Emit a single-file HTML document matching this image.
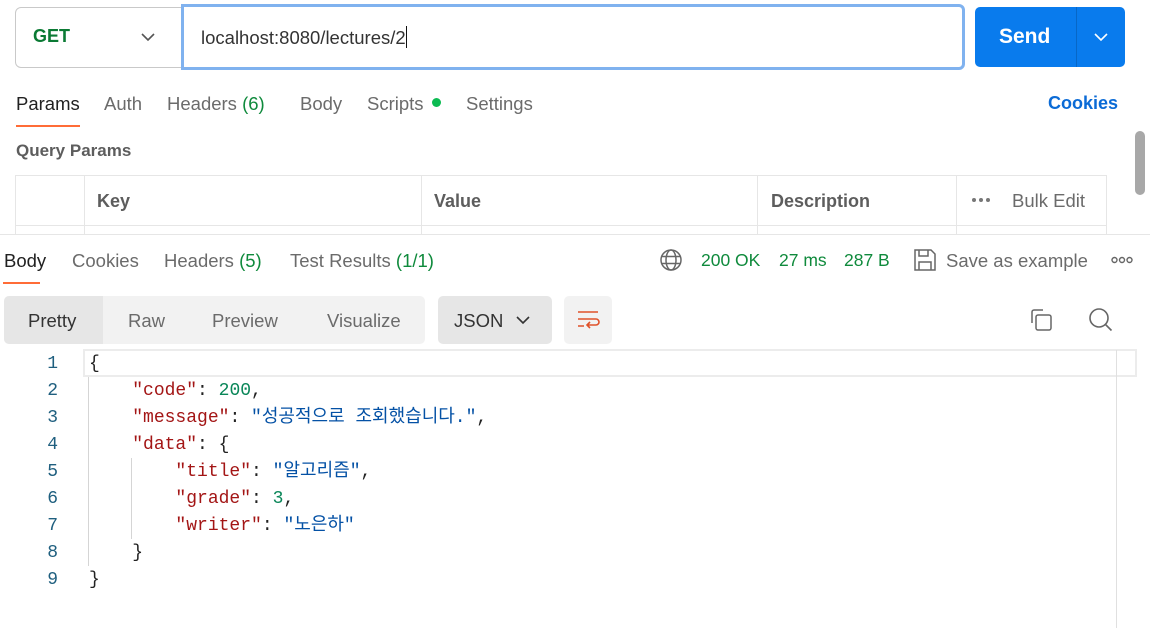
<!DOCTYPE html>
<html><head><meta charset="utf-8"><style>
*{box-sizing:border-box;margin:0;padding:0}
body{width:1150px;height:628px;overflow:hidden;background:#fff;font-family:"Liberation Sans","Noto Sans CJK KR",sans-serif;color:#212121;position:relative}
.a{position:absolute;white-space:nowrap}
.t{font-size:18.5px;color:#6b6b6b}
.g{color:#0f8a3c}
.code{font-family:"Liberation Mono","Noto Sans CJK KR",monospace;font-size:18px;line-height:27px}
.k{color:#a31515}.s{color:#0451a5}.n{color:#098658}.p{color:#222}
</style></head><body>
<div class="a" style="left:15px;top:7px;width:175px;height:61px;border:1px solid #c9c9c9;border-radius:6px 0 0 6px"></div>
<div class="a" style="left:33px;top:26px;font-size:18px;font-weight:bold;color:#0b7a34">GET</div>
<svg class="a" style="left:140px;top:31px" width="16" height="12"><path d="M2 3l6 6 6-6" fill="none" stroke="#555" stroke-width="1.6"/></svg>
<div class="a" style="left:181px;top:4px;width:784px;height:66px;border:3px solid #80b2ef;border-radius:0 6px 6px 0;background:#fff"></div>
<div class="a" style="left:201px;top:26px;font-size:18.5px;color:#333">localhost:8080/lectures/2<span style="display:inline-block;width:1px;height:22px;background:#111;vertical-align:-4px"></span></div>
<div class="a" style="left:975px;top:7px;width:150px;height:60px;background:#097bed;border-radius:5px"></div>
<div class="a" style="left:1076px;top:7px;width:1px;height:60px;background:#0767c7"></div>
<div class="a" style="left:999px;top:25px;font-size:21px;font-weight:bold;color:#fff">Send</div>
<svg class="a" style="left:1093px;top:31px" width="16" height="12"><path d="M2 3l6 6 6-6" fill="none" stroke="#fff" stroke-width="1.6"/></svg>
<div class="a t" style="left:16px;top:93px;color:#212121">Params</div>
<div class="a" style="left:16px;top:125px;width:64px;height:2px;background:#ff6c37"></div>
<div class="a t" style="left:104px;top:93px">Auth</div>
<div class="a t" style="left:167px;top:93px">Headers <span class="g">(6)</span></div>
<div class="a t" style="left:300px;top:93px">Body</div>
<div class="a t" style="left:367px;top:93px">Scripts</div>
<div class="a" style="left:432px;top:98px;width:9px;height:9px;border-radius:50%;background:#0cbb52"></div>
<div class="a t" style="left:466px;top:93px">Settings</div>
<div class="a" style="left:1048px;top:93px;font-size:18px;font-weight:bold;color:#0b6bd6">Cookies</div>
<div class="a" style="left:16px;top:141px;font-size:17px;font-weight:bold;color:#5d5d5d">Query Params</div>
<div class="a" style="left:15px;top:175px;width:1092px;height:60px;border:1px solid #e6e6e6;border-bottom:none"></div>
<div class="a" style="left:15px;top:225px;width:1092px;height:1px;background:#e6e6e6"></div>
<div class="a" style="left:84px;top:175px;width:1px;height:60px;background:#e6e6e6"></div>
<div class="a" style="left:421px;top:175px;width:1px;height:60px;background:#e6e6e6"></div>
<div class="a" style="left:757px;top:175px;width:1px;height:60px;background:#e6e6e6"></div>
<div class="a" style="left:956px;top:175px;width:1px;height:60px;background:#e6e6e6"></div>
<div class="a" style="left:97px;top:191px;font-size:18px;font-weight:bold;color:#5d5d5d">Key</div>
<div class="a" style="left:434px;top:191px;font-size:18px;font-weight:bold;color:#5d5d5d">Value</div>
<div class="a" style="left:771px;top:191px;font-size:18px;font-weight:bold;color:#5d5d5d">Description</div>
<svg class="a" style="left:971px;top:197px" width="20" height="6" fill="#777"><circle cx="3" cy="3" r="2"/><circle cx="10" cy="3" r="2"/><circle cx="17" cy="3" r="2"/></svg>
<div class="a t" style="left:1012px;top:190px">Bulk Edit</div>
<div class="a" style="left:1135px;top:131px;width:10px;height:64px;border-radius:5px;background:#a8a8a8"></div>
<div class="a" style="left:0;top:234px;width:1150px;height:394px;background:#fff;border-top:1px solid #e6e6e6"></div>
<div class="a t" style="left:4px;top:250px;color:#212121">Body</div>
<div class="a" style="left:3px;top:282px;width:37px;height:2px;background:#ff6c37"></div>
<div class="a t" style="left:72px;top:250px">Cookies</div>
<div class="a t" style="left:164px;top:250px">Headers <span class="g">(5)</span></div>
<div class="a t" style="left:290px;top:250px">Test Results <span class="g">(1/1)</span></div>
<svg class="a" style="left:659px;top:248px" width="24" height="24" fill="none" stroke="#666" stroke-width="1.5"><circle cx="12" cy="12" r="10"/><ellipse cx="12" cy="12" rx="5" ry="10"/><path d="M2.5 8.5h19M2.5 15.5h19"/></svg>
<div class="a" style="left:701px;top:250px;font-size:17.5px;color:#0f8a3c">200 OK</div>
<div class="a" style="left:779px;top:250px;font-size:17.5px;color:#0f8a3c">27 ms</div>
<div class="a" style="left:844px;top:250px;font-size:17.5px;color:#0f8a3c">287 B</div>
<svg class="a" style="left:913px;top:248px" width="24" height="24" fill="none" stroke="#666" stroke-width="1.5"><path d="M2 2h16l4 4v16H2z"/><path d="M6 2v6h9V2M6 22v-8h12v8"/></svg>
<div class="a t" style="left:946px;top:250px">Save as example</div>
<svg class="a" style="left:1111px;top:256px" width="22" height="8" fill="none" stroke="#666" stroke-width="1.4"><circle cx="3.5" cy="4" r="2.5"/><circle cx="11" cy="4" r="2.5"/><circle cx="18.5" cy="4" r="2.5"/></svg>
<div class="a" style="left:4px;top:296px;width:421px;height:48px;background:#f2f2f2;border-radius:5px"></div>
<div class="a" style="left:4px;top:296px;width:99px;height:48px;background:#e6e6e6;border-radius:5px 0 0 5px"></div>
<div class="a t" style="left:28px;top:310px;color:#333">Pretty</div>
<div class="a t" style="left:128px;top:310px">Raw</div>
<div class="a t" style="left:212px;top:310px">Preview</div>
<div class="a t" style="left:327px;top:310px">Visualize</div>
<div class="a" style="left:438px;top:296px;width:114px;height:48px;background:#e6e6e6;border-radius:5px"></div>
<div class="a t" style="left:454px;top:310px;color:#333">JSON</div>
<svg class="a" style="left:515px;top:314px" width="16" height="12"><path d="M2 3l6 6 6-6" fill="none" stroke="#333" stroke-width="1.6"/></svg>
<div class="a" style="left:564px;top:296px;width:48px;height:48px;background:#f2f2f2;border-radius:5px"></div>
<svg class="a" style="left:576px;top:308px" width="24" height="24" fill="none" stroke="#e0522a" stroke-width="1.6"><path d="M2 4h20M2 11h18a3 3 0 0 1 0 6h-8M2 18h6M14 14l-3 3 3 3"/></svg>
<svg class="a" style="left:1029px;top:308px" width="26" height="26" fill="none" stroke="#666" stroke-width="1.5"><path d="M3 15V4a2 2 0 0 1 2-2h9"/><rect x="7" y="7" width="15" height="15" rx="2"/></svg>
<svg class="a" style="left:1088px;top:307px" width="26" height="26" fill="none" stroke="#666" stroke-width="1.6"><circle cx="11" cy="11" r="9"/><path d="M17.5 17.5l6 6"/></svg>
<div class="a" style="left:83px;top:349px;width:1054px;height:28px;border:2px solid #ececec"></div>
<div class="a" style="left:1116px;top:350px;width:1px;height:278px;background:#e0e0e0"></div>
<div class="a" style="left:88px;top:377px;width:1px;height:189px;background:#d5d5d5"></div>
<div class="a" style="left:131px;top:458px;width:1px;height:81px;background:#d5d5d5"></div>
<div class="a code" style="left:30px;top:351px;width:28px;text-align:right;color:#1f5f7f">1<br>2<br>3<br>4<br>5<br>6<br>7<br>8<br>9</div>
<div class="a code p" style="left:89px;top:351px;white-space:pre">{
    <span class="k">"code"</span>: <span class="n">200</span>,
    <span class="k">"message"</span>: <span class="s">"성공적으로 조회했습니다."</span>,
    <span class="k">"data"</span>: {
        <span class="k">"title"</span>: <span class="s">"알고리즘"</span>,
        <span class="k">"grade"</span>: <span class="n">3</span>,
        <span class="k">"writer"</span>: <span class="s">"노은하"</span>
    }
}</div>
</body></html>
